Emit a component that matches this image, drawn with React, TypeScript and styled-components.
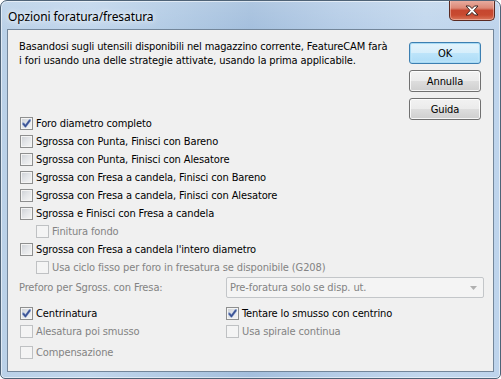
import React from 'react';
import styled, { createGlobalStyle } from 'styled-components';

const Global = createGlobalStyle`
  html, body { margin: 0; padding: 0; background: #ffffff; }
  body { width: 501px; height: 379px; overflow: hidden; }
  * { box-sizing: border-box; }
`;

const UI_FONT = `"DejaVu Sans Condensed", "DejaVu Sans", sans-serif`;

const Window = styled.div`
  width: 501px;
  height: 379px;
  border: 1px solid #4f6377;
  border-radius: 7px 7px 5px 5px;
  background:
    linear-gradient(180deg, rgba(255,255,255,0.12) 0%, rgba(255,255,255,0) 30px),
    linear-gradient(90deg, #bad1e8 0%, #c1d6ec 18%, #b1cae4 35%, #a4bfdd 50%, #b6cde7 68%, #c2d7ed 85%, #bed4ec 100%);
  display: flex;
  flex-direction: column;
  padding: 0 6px 6px 6px;
  overflow: hidden;
  box-shadow: inset 0 0 0 1px rgba(255,255,255,0.55);
`;

const TitleBar = styled.div`
  height: 28px;
  display: flex;
  align-items: flex-start;
  justify-content: space-between;
`;

const TitleText = styled.div`
  font-family: "Noto Sans", "Open Sans", sans-serif;
  font-size: 12px;
  color: #000;
  padding: 7px 0 0 1px;
  letter-spacing: -0.1px;
  text-shadow: 0 0 8px rgba(255,255,255,0.95), 0 0 4px rgba(255,255,255,0.8);
`;

const CloseButton = styled.div`
  width: 46px;
  height: 21px;
  margin-top: -1px;
  margin-right: -1px;
  border: 1px solid #5a2a22;
  border-top: none;
  border-radius: 0 0 5px 5px;
  background: linear-gradient(180deg, #e9b0a4 0%, #dc8876 40%, #c6462f 52%, #c84a30 75%, #d9755a 100%);
  box-shadow: inset 0 0 0 1px rgba(255,220,210,0.45);
  display: flex;
  align-items: center;
  justify-content: center;
`;

const Client = styled.div`
  flex: 1;
  border: 1px solid #73869a;
  background: #f0f0f0;
  display: flex;
  flex-direction: column;
  font-family: ${UI_FONT};
  font-size: 11px;
  letter-spacing: -0.12px;
  color: #000;
`;

const TopGrid = styled.div`
  display: grid;
  grid-template-columns: 1fr 72px;
  column-gap: 10px;
  padding-right: 12px;
`;

const Description = styled.div`
  grid-column: 1;
  grid-row: 1;
  padding: 10px 0 0 11px;
  line-height: 14px;
  height: 87px;
  white-space: nowrap;
`;

const ButtonColumn = styled.div`
  grid-column: 2;
  grid-row: 1 / span 2;
  display: flex;
  flex-direction: column;
  gap: 6px;
  margin-top: 12px;
`;

const Button = styled.div<{ $default?: boolean }>`
  width: 72px;
  height: 22px;
  border: 1px solid ${p => (p.$default ? '#3c7fb1' : '#707070')};
  border-radius: 3px;
  background: ${p =>
    p.$default
      ? 'linear-gradient(180deg, #e5f4fc 0%, #d6eefb 50%, #bde4fa 51%, #acdcf7 100%)'
      : 'linear-gradient(180deg, #f2f2f2 0%, #ebebeb 50%, #dddddd 51%, #cfcfcf 100%)'};
  box-shadow: ${p =>
    p.$default ? 'inset 0 0 0 1px #a8daf4, inset 0 0 2px 1px #d4eefc' : 'inset 0 0 0 1px rgba(255,255,255,0.8)'};
  display: flex;
  align-items: center;
  justify-content: center;
  font-family: ${UI_FONT};
  font-size: 11px;
  color: #000;
`;

const OptionList = styled.div`
  grid-column: 1;
  grid-row: 2;
  display: flex;
  flex-direction: column;
  gap: 5px;
  padding-left: 12px;
`;

const Row = styled.label<{ $indent?: boolean; $disabled?: boolean }>`
  display: flex;
  align-items: center;
  height: 13px;
  gap: 3px;
  margin-left: ${p => (p.$indent ? '16px' : '0')};
  color: ${p => (p.$disabled ? '#838383' : '#000')};
  white-space: nowrap;
  line-height: 13px;
`;

const Box = styled.span<{ $disabled?: boolean }>`
  width: 13px;
  height: 13px;
  flex: none;
  border: 1px solid ${p => (p.$disabled ? '#bfc1c3' : '#8e8f8f')};
  background: ${p =>
    p.$disabled ? '#f4f4f4' : 'linear-gradient(135deg, #cbcfd4 0%, #e2e4e7 45%, #f6f6f6 100%)'};
  box-shadow: ${p => (p.$disabled ? 'none' : 'inset 0 0 0 1px #f4f4f4')};
  display: flex;
  align-items: center;
  justify-content: center;
`;

const PreforoRow = styled.div`
  display: flex;
  align-items: center;
  margin-top: 3px;
  padding-left: 11px;
  padding-right: 9px;
`;

const FieldLabel = styled.span`
  width: 207px;
  flex: none;
  color: #838383;
  white-space: nowrap;
`;

const Dropdown = styled.div`
  flex: 1;
  height: 21px;
  border: 1px solid #c3c6c9;
  border-radius: 2px;
  background: #f4f4f4;
  color: #838383;
  display: flex;
  align-items: center;
  justify-content: space-between;
  padding: 0 6px 0 3px;
  white-space: nowrap;
`;

const BottomGrid = styled.div`
  display: grid;
  grid-template-columns: 206px 1fr;
  row-gap: 5px;
  margin-top: 9px;
  padding-left: 12px;
`;

const LastRow = styled.div`
  grid-column: 1;
  margin-top: 3px;
`;

function Check() {
  return (
    <svg width="9" height="9" viewBox="0 0 9 9">
      <path d="M1.2 4.6 L3.4 7.2 L7.9 1.2" fill="none" stroke="#8fa4cf" strokeWidth="2.6" strokeLinejoin="round" strokeLinecap="round" />
      <path d="M1.2 4.6 L3.4 7.2 L7.9 1.2" fill="none" stroke="#3c5394" strokeWidth="1.6" strokeLinejoin="miter" />
    </svg>
  );
}

type CB = { label: string; checked?: boolean; disabled?: boolean; indent?: boolean };

function CheckRow({ label, checked, disabled, indent }: CB) {
  return (
    <Row $indent={indent} $disabled={disabled}>
      <Box $disabled={disabled}>{checked ? <Check /> : null}</Box>
      <span>{label}</span>
    </Row>
  );
}

const options: CB[] = [
  { label: 'Foro diametro completo', checked: true },
  { label: 'Sgrossa con Punta, Finisci con Bareno' },
  { label: 'Sgrossa con Punta, Finisci con Alesatore' },
  { label: 'Sgrossa con Fresa a candela, Finisci con Bareno' },
  { label: 'Sgrossa con Fresa a candela, Finisci con Alesatore' },
  { label: 'Sgrossa e Finisci con Fresa a candela' },
  { label: 'Finitura fondo', disabled: true, indent: true },
  { label: "Sgrossa con Fresa a candela l'intero diametro" },
  { label: 'Usa ciclo fisso per foro in fresatura se disponibile (G208)', disabled: true, indent: true },
];

export default function App() {
  return (
    <>
      <Global />
      <Window>
        <TitleBar>
          <TitleText>Opzioni foratura/fresatura</TitleText>
          <CloseButton>
            <svg width="14" height="11" viewBox="0 0 14 11">
              <path
                d="M1 1 H4.5 L7 3.6 L9.5 1 H13 L8.9 5.5 L13 10 H9.5 L7 7.4 L4.5 10 H1 L5.1 5.5 Z"
                fill="#ffffff"
                stroke="#3a2420"
                strokeWidth="1"
                strokeLinejoin="round"
              />
            </svg>
          </CloseButton>
        </TitleBar>
        <Client>
          <TopGrid>
            <Description>
              Basandosi sugli utensili disponibili nel magazzino corrente, FeatureCAM farà
              <br />
              i fori usando una delle strategie attivate, usando la prima applicabile.
            </Description>
            <ButtonColumn>
              <Button $default>OK</Button>
              <Button>Annulla</Button>
              <Button>Guida</Button>
            </ButtonColumn>
            <OptionList>
              {options.map(o => (
                <CheckRow key={o.label} {...o} />
              ))}
            </OptionList>
          </TopGrid>
          <PreforoRow>
            <FieldLabel>Preforo per Sgross. con Fresa:</FieldLabel>
            <Dropdown>
              <span>Pre-foratura solo se disp. ut.</span>
              <svg width="7" height="4" viewBox="0 0 7 4">
                <path d="M0 0 H7 L3.5 4 Z" fill="#b0b0b0" />
              </svg>
            </Dropdown>
          </PreforoRow>
          <BottomGrid>
            <CheckRow label="Centrinatura" checked />
            <CheckRow label="Tentare lo smusso con centrino" checked />
            <CheckRow label="Alesatura poi smusso" disabled />
            <CheckRow label="Usa spirale continua" disabled />
            <LastRow>
              <CheckRow label="Compensazione" disabled />
            </LastRow>
          </BottomGrid>
        </Client>
      </Window>
    </>
  );
}
